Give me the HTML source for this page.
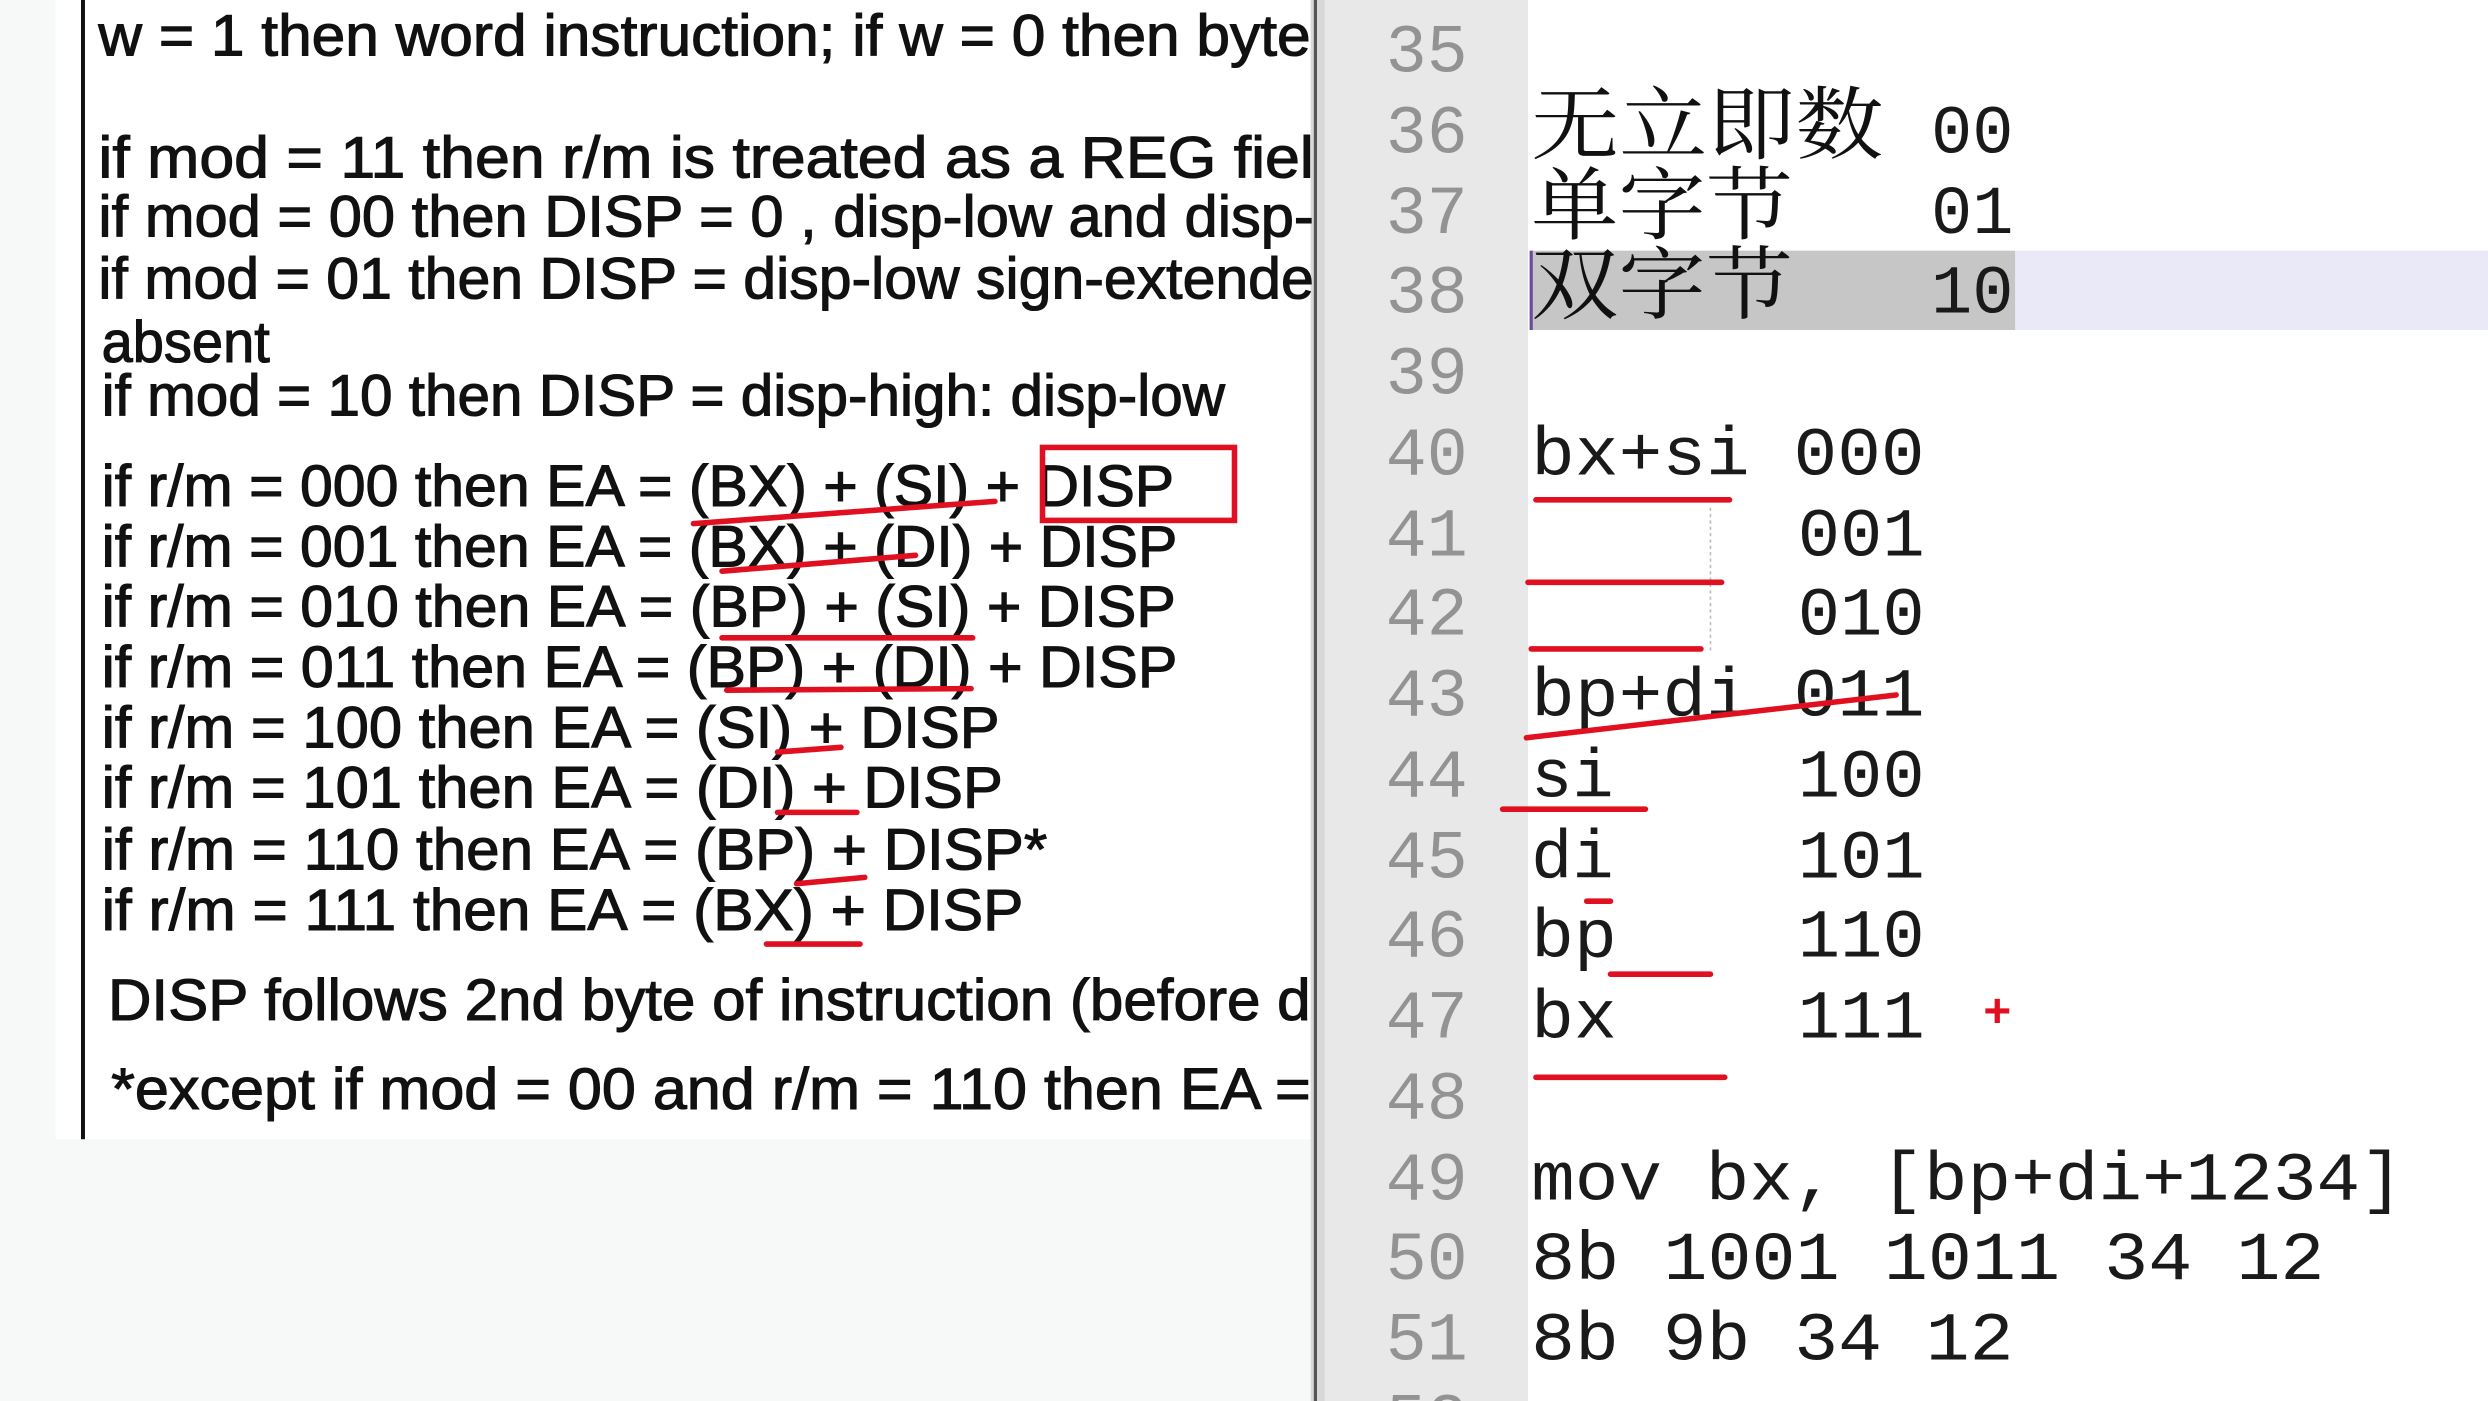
<!DOCTYPE html>
<html><head><meta charset="utf-8"><style>
html,body{margin:0;padding:0;background:#fff;overflow:hidden}
svg{display:block}
.d{font-family:"Liberation Sans",sans-serif;font-size:37px;fill:#111;stroke:#111;stroke-width:0.7;white-space:pre}
.m{font-family:"Liberation Mono",monospace;font-size:43px;fill:#1a1a1a}
.n{font-family:"Liberation Mono",monospace;font-size:43px;fill:#939393}
.c{font-family:"Liberation Serif","Noto Serif CJK SC",serif;font-size:50px;fill:#111}
.r{stroke:#e01020;stroke-width:3.5;stroke-linecap:round;fill:none}
</style></head><body>
<svg width="2488" height="1401" viewBox="0 0 1568 883" xmlns="http://www.w3.org/2000/svg" xml:space="preserve">
<rect x="0" y="0" width="1568" height="883" fill="#fff"/>
<rect x="0" y="0" width="830" height="883" fill="#f7f9f8"/>
<rect x="35" y="0" width="792" height="718" fill="#fff"/>
<rect x="51" y="0" width="2.5" height="718" fill="#111"/>
<rect x="826" y="0" width="9" height="883" fill="#d8d8d8"/>
<rect x="828" y="0" width="2" height="883" fill="#555"/>
<rect x="835" y="0" width="128" height="883" fill="#e8e8e8"/>
<g class="d">
<text x="62" y="35" textLength="764" lengthAdjust="spacingAndGlyphs">w = 1  then  word  instruction;  if  w = 0  then  byte</text>
<text x="62" y="112" textLength="766" lengthAdjust="spacingAndGlyphs">if  mod = 11  then  r/m  is  treated  as  a  REG  fiel</text>
<text x="62" y="149" textLength="766" lengthAdjust="spacingAndGlyphs">if  mod = 00  then  DISP = 0 ,  disp-low  and  disp-</text>
<text x="62" y="188" textLength="766" lengthAdjust="spacingAndGlyphs">if  mod = 01  then  DISP = disp-low  sign-extende</text>
<text x="64" y="228" textLength="106" lengthAdjust="spacingAndGlyphs">absent</text>
<text x="64" y="262" textLength="708" lengthAdjust="spacingAndGlyphs">if  mod = 10  then  DISP = disp-high:  disp-low</text>
<text x="64" y="319" textLength="676" lengthAdjust="spacingAndGlyphs">if  r/m = 000  then  EA = (BX) + (SI) + DISP</text>
<text x="64" y="357" textLength="678" lengthAdjust="spacingAndGlyphs">if  r/m = 001  then  EA = (BX) + (DI) + DISP</text>
<text x="64" y="395" textLength="677" lengthAdjust="spacingAndGlyphs">if  r/m = 010  then  EA = (BP) + (SI) + DISP</text>
<text x="64" y="433" textLength="678" lengthAdjust="spacingAndGlyphs">if  r/m = 011  then  EA = (BP) + (DI) + DISP</text>
<text x="64" y="471" textLength="566" lengthAdjust="spacingAndGlyphs">if  r/m = 100  then  EA = (SI) + DISP</text>
<text x="64" y="509" textLength="568" lengthAdjust="spacingAndGlyphs">if  r/m = 101  then  EA = (DI) + DISP</text>
<text x="64" y="548" textLength="596" lengthAdjust="spacingAndGlyphs">if  r/m = 110  then  EA = (BP) + DISP*</text>
<text x="64" y="586" textLength="581" lengthAdjust="spacingAndGlyphs">if  r/m = 111  then  EA = (BX) + DISP</text>
<text x="68" y="643" textLength="758" lengthAdjust="spacingAndGlyphs">DISP  follows  2nd  byte  of  instruction  (before  d</text>
<text x="70" y="699" textLength="756" lengthAdjust="spacingAndGlyphs">*except  if  mod = 00  and  r/m = 110  then  EA =</text>
</g>
<rect x="657" y="282" width="121" height="46" fill="none" stroke="#e01020" stroke-width="3.5"/>
<path class="r" d="M437 330 L627 316"/>
<path class="r" d="M455 360 L577 350"/>
<path class="r" d="M455 402 L613 402"/>
<path class="r" d="M458 435 L612 434"/>
<path class="r" d="M490 474 L530 471"/>
<path class="r" d="M490 512 L540 512"/>
<path class="r" d="M502 557 L545 553"/>
<path class="r" d="M483 595 L542 595"/>
<rect x="1270" y="158" width="298" height="50" fill="#e9e9f8"/>
<rect x="965" y="158" width="305" height="50" fill="#c6c6c6"/>
<rect x="964" y="158" width="2" height="50" fill="#6a4aa0"/>
<g class="n" text-anchor="end">
<text x="925" y="45">35</text><text x="925" y="96">36</text><text x="925" y="147">37</text>
<text x="925" y="197">38</text><text x="925" y="248">39</text><text x="925" y="299">40</text>
<text x="925" y="350">41</text><text x="925" y="400">42</text><text x="925" y="451">43</text>
<text x="925" y="502">44</text><text x="925" y="553">45</text><text x="925" y="603">46</text>
<text x="925" y="654">47</text><text x="925" y="705">48</text><text x="925" y="756">49</text>
<text x="925" y="806">50</text><text x="925" y="857">51</text><text x="925" y="908">52</text>
</g>
<g class="c">
<text x="965" y="96" textLength="222" lengthAdjust="spacingAndGlyphs">无立即数</text>
<text x="965" y="147" textLength="165" lengthAdjust="spacingAndGlyphs">单字节</text>
<text x="965" y="197" textLength="165" lengthAdjust="spacingAndGlyphs">双字节</text>
</g>
<g class="m">
<text x="1217" y="96" textLength="52" lengthAdjust="spacingAndGlyphs">00</text>
<text x="1217" y="147" textLength="52" lengthAdjust="spacingAndGlyphs">01</text>
<text x="1217" y="197" textLength="52" lengthAdjust="spacingAndGlyphs">10</text>
<text x="965" y="299" textLength="248" lengthAdjust="spacingAndGlyphs">bx+si 000</text>
<text x="1133" y="350" textLength="80" lengthAdjust="spacingAndGlyphs">001</text>
<text x="1133" y="400" textLength="80" lengthAdjust="spacingAndGlyphs">010</text>
<text x="965" y="451" textLength="248" lengthAdjust="spacingAndGlyphs">bp+di 011</text>
<text x="965" y="502" textLength="52" lengthAdjust="spacingAndGlyphs">si</text>
<text x="1133" y="502" textLength="80" lengthAdjust="spacingAndGlyphs">100</text>
<text x="965" y="553" textLength="52" lengthAdjust="spacingAndGlyphs">di</text>
<text x="1133" y="553" textLength="80" lengthAdjust="spacingAndGlyphs">101</text>
<text x="965" y="603" textLength="54" lengthAdjust="spacingAndGlyphs">bp</text>
<text x="1133" y="603" textLength="80" lengthAdjust="spacingAndGlyphs">110</text>
<text x="965" y="654" textLength="54" lengthAdjust="spacingAndGlyphs">bx</text>
<text x="1133" y="654" textLength="80" lengthAdjust="spacingAndGlyphs">111</text>
<text x="965" y="756" textLength="550" lengthAdjust="spacingAndGlyphs">mov bx, [bp+di+1234]</text>
<text x="965" y="806" textLength="500" lengthAdjust="spacingAndGlyphs">8b 1001 1011 34 12</text>
<text x="965" y="857" textLength="304" lengthAdjust="spacingAndGlyphs">8b 9b 34 12</text>
</g>
<text x="1250" y="647" font-family="Liberation Sans,sans-serif" font-size="30" fill="#e01020" font-weight="bold">+</text>
<line x1="1078" y1="320" x2="1078" y2="410" stroke="#bbb" stroke-width="1" stroke-dasharray="2,2"/>
<path class="r" d="M968 315 L1090 315"/>
<path class="r" d="M963 367 L1085 367"/>
<path class="r" d="M965 409 L1072 409"/>
<path class="r" d="M962 465 L1195 438"/>
<path class="r" d="M947 510 L1037 510"/>
<path class="r" d="M1000 568 L1015 568"/>
<path class="r" d="M1015 614 L1078 614"/>
<path class="r" d="M968 679 L1087 679"/>
</svg>
</body></html>
